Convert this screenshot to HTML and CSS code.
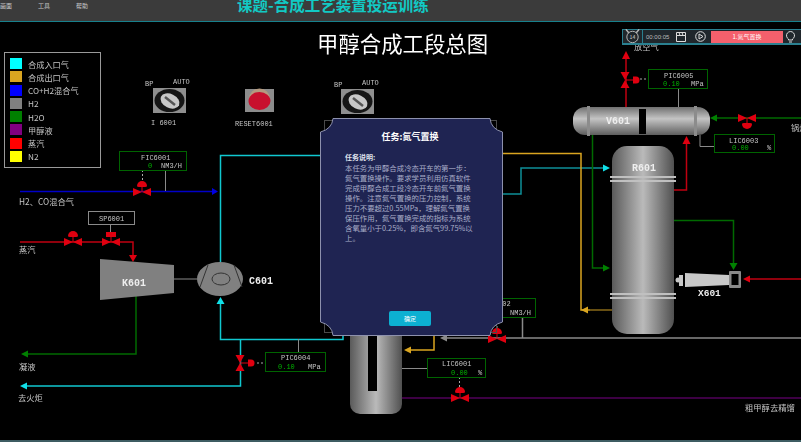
FILE: index.html
```html
<!DOCTYPE html>
<html lang="zh-CN">
<head>
    <meta charset="UTF-8">
    <title>甲醇合成工段总图</title>
    <link rel="stylesheet" href="styles.css">
</head>
<body>
    <header class="topbar">
        <nav class="menu">
            <span>画面</span>
            <span>工具</span>
            <span>帮助</span>
        </nav>
        <h1 class="course-title">课题-合成工艺装置投运训练</h1>
    </header>

    <main class="canvas">
        <svg class="diagram" viewBox="0 22 801 418" width="801" height="418">
            <defs>
                <linearGradient id="cyl" x1="0" x2="1" y1="0" y2="0">
                    <stop offset="0" stop-color="#5a5a5a"/>
                    <stop offset="0.5" stop-color="#bababa"/>
                    <stop offset="1" stop-color="#505050"/>
                </linearGradient>
                <linearGradient id="drum" x1="0" x2="0" y1="0" y2="1">
                    <stop offset="0" stop-color="#707070"/>
                    <stop offset="0.42" stop-color="#c4c4c4"/>
                    <stop offset="1" stop-color="#5e5e5e"/>
                </linearGradient>
                <g id="valve">
                    <path class="valve-stem" d="M0 0V-6"/>
                    <path class="valve-red" d="M-9 -4L0 0L-9 4ZM9 -4L0 0L9 4Z"/>
                    <path class="valve-red" d="M-5 -6A5 5 0 0 1 5 -6Q5 -5 3 -5H-3Q-5 -5 -5 -6Z"/>
                </g>
                <g id="valve-side">
                    <path class="valve-stem" d="M0 0H9"/>
                    <path class="valve-red" d="M-4.500 -8L0 0L4.500 -8ZM-4.500 8L0 0L4.500 8Z"/>
                    <path class="valve-red" d="M8 -3.500H11A3.500 3.500 0 0 1 11 3.500H8Z"/>
                </g>
                <g id="valve-flat">
                    <path class="valve-stem" d="M0 0V-6"/>
                    <path class="valve-red" d="M-9 -4L0 0L-9 4ZM9 -4L0 0L9 4Z"/>
                    <rect class="valve-red" x="-5" y="-10" width="10" height="5"/>
                </g>
                <g id="switch">
                    <rect width="33" height="25" fill="#8f8f8f"/>
                    <ellipse cx="16.500" cy="12.500" rx="15" ry="11.500" fill="#161616"/>
                    <ellipse cx="17" cy="13" rx="10" ry="7" fill="#c8c8c8" transform="rotate(25 17 13)"/>
                    <path d="M12 9L22 17" stroke="#555" stroke-width="2.500"/>
                </g>
            </defs>

            <text class="main-title" x="317" y="52">甲醇合成工段总图</text>

            <!-- pipes -->
            <path class="pipe blue" d="M20 191.500H214"/>
            <path class="arrow-blue" d="M218 191.500L212 188V195Z"/>
            <path class="pipe cyan" d="M220.500 262V155.500H330"/>
            <path class="pipe cyan" d="M220.500 300V339.500H343V330"/>
            <path class="arrow-cyan" d="M220.500 297L216.500 304H224.500Z"/>
            <path class="pipe cyan" d="M240.500 339.500V386H25"/>
            <path class="arrow-cyan" d="M20 386L27 382.500V389.500Z"/>
            <path class="pipe cyan dim" d="M495 194H521V168H606"/>
            <path class="arrow-cyan" d="M610 168L603 164.500V171.500Z"/>
            <path class="pipe red" d="M20 242H133V258"/>
            <path class="arrow-red" d="M133 262L129 255H137Z"/>
            <path class="pipe green" d="M136 293V354H27"/>
            <path class="arrow-green" d="M21 354L28 350.500V357.500Z"/>
            <path class="pipe thin-gray" d="M174 279H197" stroke-width="2"/>
            <path class="pipe orange" d="M495 153.500H581V310H590"/>
            <path class="pipe orange dark" d="M586 310H612"/>
            <path class="arrow-orange" d="M581 310L588 306.500V313.500Z"/>
            <path class="pipe orange" d="M434 330V350H410"/>
            <path class="arrow-orange" d="M404 350L411 346.500V353.500Z"/>
            <path class="pipe gray" d="M447 338H801"/>
            <path class="arrow-gray" d="M440 338L447 334.500V341.500Z"/>
            <path class="pipe gray" d="M522.500 318V338"/>
            <path class="pipe purple" d="M402 398H801"/>
            <path class="pipe red" d="M626 107V56"/>
            <path class="arrow-red" d="M626 51L622 59H630Z"/>
            <path class="pipe red" d="M673 190H686.500V142"/>
            <path class="arrow-red" d="M686.500 136L682.500 144H690.500Z"/>
            <path class="pipe green" d="M592.500 135V268H604"/>
            <path class="arrow-green" d="M610 268L603 264.500V271.500Z"/>
            <path class="pipe green" d="M674 220.500H733.500V265"/>
            <path class="arrow-green" d="M733.500 270L729.500 263H737.500Z"/>
            <path class="pipe green" d="M716 118H801"/>
            <path class="arrow-green" d="M710 118L717 114.500V121.500Z"/>
            <path class="pipe red" d="M749 279H801"/>
            <path class="arrow-red" d="M743 279L750 275.500V282.500Z"/>

            <!-- signal lines -->
            <path class="pipe thin-gray" d="M165.500 170V191M110.500 224V232M298.500 339V352M678.500 88V107M402 368.500H427M700 135V146.500H714"/>
            <path class="dash" d="M142.500 170V182M257 363H265M640 79H648M459.500 377V388M497 318V328"/>

            <!-- equipment -->
            <path class="machine" d="M100 259L174 265V293L100 300Z"/>
            <text class="equip" x="122" y="286">K601</text>
            <ellipse class="machine" cx="220" cy="279" rx="23" ry="17"/>
            <ellipse class="machine-line" cx="221" cy="279" rx="9" ry="6"/>
            <path class="machine-line" d="M208 265L200 287M234 265L242 287"/>
            <text class="equip" x="249" y="284">C601</text>

            <rect x="350" y="300" width="52" height="114" rx="10" fill="url(#cyl)"/>
            <rect x="368" y="300" width="9" height="91" fill="#000"/>

            <rect x="612" y="146" width="62" height="188" rx="15" fill="url(#cyl)"/>
            <rect class="band" x="610" y="176" width="66" height="2"/>
            <rect class="band" x="610" y="180" width="66" height="2"/>
            <rect class="band" x="610" y="293" width="66" height="2"/>
            <rect class="band" x="610" y="297" width="66" height="2"/>
            <text class="equip" x="632" y="171">R601</text>

            <rect x="573" y="107" width="137" height="28" rx="12" fill="url(#drum)"/>
            <rect class="band-v" x="587" y="106" width="3" height="30"/>
            <rect class="band-v" x="694" y="106" width="3" height="30"/>
            <rect x="639" y="109" width="7" height="25" fill="#000"/>
            <text class="equip" x="606" y="124">V601</text>

            <circle class="bolt" cx="678" cy="280" r="2.500"/>
            <rect class="bolt" x="679" y="275" width="4" height="11"/>
            <path class="bolt" d="M685 273L729 275V285L685 287Z"/>
            <rect x="729" y="271" width="12" height="17" rx="1" fill="#8a8a8a"/>
            <rect x="731.500" y="274" width="7" height="11" fill="#000"/>
            <text class="equip small" x="698" y="296">X601</text>

            <!-- valves -->
            <use href="#valve" x="142" y="192"/>
            <use href="#valve" x="73" y="242"/>
            <use href="#valve-flat" x="111" y="242"/>
            <use href="#valve" x="460" y="398"/>
            <use href="#valve" x="497" y="339"/>
            <use href="#valve" x="747" y="118" transform="rotate(180 747 118)"/>
            <use href="#valve-side" x="240" y="363"/>
            <use href="#valve-side" x="625" y="80"/>

            <!-- panel switches -->
            <use href="#switch" x="153" y="88"/>
            <use href="#switch" x="341" y="89"/>
            <rect x="245" y="89" width="29" height="23" fill="#8c8c8c"/>
            <circle cx="259.500" cy="99" r="10.500" fill="#b49a80"/>
            <ellipse cx="259.500" cy="101" rx="11" ry="9" fill="#c8102e"/>
            <text class="tag" x="145" y="86">BP</text>
            <text class="tag" x="173" y="84">AUTO</text>
            <text class="tag" x="151" y="125">I 6001</text>
            <text class="tag" x="235" y="126">RESET6001</text>
            <text class="tag" x="334" y="87">BP</text>
            <text class="tag" x="362" y="85">AUTO</text>

            <!-- instruments -->
            <rect class="inst" x="119.500" y="151.500" width="67" height="19"/>
            <text class="tag" x="141" y="160">FIC6001</text>
            <text class="val" x="148" y="168">0</text>
            <text class="tag" x="161" y="168">NM3/H</text>

            <rect class="inst-gray" x="88.500" y="211.500" width="46" height="13"/>
            <text class="tag" x="99" y="221">SP6001</text>

            <rect class="inst" x="265.500" y="352.500" width="60" height="19"/>
            <text class="tag" x="281" y="360">PIC6004</text>
            <text class="val" x="278" y="369">0.10</text>
            <text class="tag" x="308" y="369">MPa</text>

            <rect class="inst" x="427.500" y="358.500" width="58" height="19"/>
            <text class="tag" x="442" y="366">LIC6001</text>
            <text class="val" x="451" y="375">0.00</text>
            <text class="tag" x="478" y="375">%</text>

            <rect class="inst" x="488.500" y="298.500" width="47" height="19"/>
            <text class="tag" x="498" y="306">002</text>
            <text class="tag" x="510" y="315">NM3/H</text>

            <rect class="inst" x="648.500" y="69.500" width="59" height="19"/>
            <text class="tag" x="664" y="78">PIC6005</text>
            <text class="val" x="663" y="86">0.10</text>
            <text class="tag" x="691" y="86">MPa</text>

            <rect class="inst" x="714.500" y="134.500" width="60" height="18"/>
            <text class="tag" x="729" y="143">LIC6003</text>
            <text class="val" x="732" y="150">0.00</text>
            <text class="tag" x="767" y="150">%</text>

            <!-- stream labels -->
            <text class="label" x="19" y="205">H2、CO混合气</text>
            <text class="label" x="19" y="253">蒸汽</text>
            <text class="label" x="19" y="370">凝液</text>
            <text class="label" x="18" y="401">去火炬</text>
            <text class="label" x="745" y="411">粗甲醇去精馏</text>
            <text class="label" x="791" y="131">锅炉</text>
            <text class="label" x="634" y="50">放空气</text>

            <!-- frame behind the task dialog -->
            <rect class="modal-frame" x="324.500" y="120.500" width="172" height="212"/>
        </svg>

        <ul class="legend">
            <li><i class="swatch s-cyan"></i>合成入口气</li>
            <li><i class="swatch s-orange"></i>合成出口气</li>
            <li><i class="swatch s-blue"></i>CO+H2混合气</li>
            <li><i class="swatch s-gray"></i>H2</li>
            <li><i class="swatch s-green"></i>H2O</li>
            <li><i class="swatch s-purple"></i>甲醇液</li>
            <li><i class="swatch s-red"></i>蒸汽</li>
            <li><i class="swatch s-yellow"></i>N2</li>
        </ul>

        <div class="toolbar">
            <svg class="tool-clock" width="20" height="15" viewBox="0 0 20 15">
                <path d="M3 0L6 3.500M17 0L14 3.500" stroke="#bbb" stroke-width="1.500" fill="none"/>
                <circle cx="10" cy="8" r="6" stroke="#bbb" fill="none"/>
                <text x="10" y="10" text-anchor="middle" class="clock-num">14</text>
            </svg>
            <span class="tool-time">00:00:05</span>
            <svg class="tool-doc" width="10" height="10" viewBox="0 0 10 10">
                <path d="M0.500 3.500H9.500V9.500H0.500ZM0.500 0.500H9.500V3.500H0.500ZM3 0.500L4 3.500M6 0.500L7 3.500" stroke="#ddd" fill="none"/>
            </svg>
            <svg class="tool-play" width="11" height="11" viewBox="0 0 11 11">
                <circle cx="5.500" cy="5.500" r="4.800" stroke="#ddd" fill="none"/>
                <path d="M4 3L8 5.500L4 8Z" stroke="#ddd" fill="none"/>
            </svg>
            <span class="tool-step">1.氮气置换</span>
            <svg class="tool-bulb" width="9" height="12" viewBox="0 0 9 12">
                <path d="M2.500 8A4 4 0 1 1 6.500 8V9H2.500ZM3 11H6" stroke="#ddd" fill="none"/>
            </svg>
        </div>

        <section class="task-modal">
            <svg class="modal-shape" viewBox="0 0 183 218" width="183" height="218">
                <path d="M13 .5H170Q171 11 182.500 14V204Q171 207 170 217.500H13Q12 207 .5 204V14Q12 11 13 .5Z"/>
            </svg>
            <div class="modal-body">
                <h2>任务:氮气置换</h2>
                <h3>任务说明:</h3>
                <p>本任务为甲醇合成冷态开车的第一步&#65306;氮气置换操作。要求学员利用仿真软件完成甲醇合成工段冷态开车前氮气置换操作。注意氮气置换的压力控制&#65292;系统压力不要超过0.55MPa&#65292;理解氮气置换保压作用&#65292;氮气置换完成的指标为系统含氧量小于0.25%&#65292;即含氮气99.75%以上。</p>
                <button class="confirm">确定</button>
            </div>
        </section>
    </main>

    <div class="bottom-strip"></div>
</body>
</html>
```

FILE: styles.css
```css
* {
    box-sizing: border-box;
    margin: 0;
    padding: 0;
}

html, body {
    width: 801px;
    height: 442px;
    overflow: hidden;
    background-color: #000;
}

body {
    font-family: "Noto Sans CJK SC", "Liberation Sans", sans-serif;
    display: flex;
    flex-direction: column;
}

.topbar {
    height: 22px;
    flex: none;
    display: flex;
    overflow: hidden;
    background-color: #3b3b3b;
    border-bottom: 1px solid #17808c;
}

.menu {
    display: flex;
    gap: 26px;
    width: 237px;
    padding-top: 1px;
    font-size: 6px;
    line-height: 10px;
    color: #c8c8c8;
}

.course-title {
    font-size: 15.500px;
    line-height: 16px;
    margin-top: -4px;
    color: #12c9c4;
    white-space: nowrap;
}

.canvas {
    position: relative;
    flex: 1;
}

.diagram {
    display: block;
    filter: blur(0.35px);
}

.main-title {
    font-size: 21.400px;
    fill: #fff;
}

.pipe {
    fill: none;
    stroke-width: 1.500;
}

.blue { stroke: #0000c8; }
.cyan { stroke: #10c8d0; }
.cyan.dim { stroke: #0e8f98; }
.red { stroke: #c00010; }
.green { stroke: #006a00; }
.orange { stroke: #daa520; }
.orange.dark { stroke: #8a6a18; }
.gray { stroke: #8a8a8a; }
.thin-gray { stroke: #8a8a8a; stroke-width: 1; }
.purple { stroke: #50005a; }

.arrow-blue { fill: #0000e0; }
.arrow-cyan { fill: #10e0e8; }
.arrow-red { fill: #e00010; }
.arrow-green { fill: #008000; }
.arrow-orange { fill: #daa520; }
.arrow-gray { fill: #8a8a8a; }

.dash {
    stroke: #aaa;
    stroke-dasharray: 2 2;
    fill: none;
}

.machine { fill: #808080; }

.machine-line {
    fill: none;
    stroke: #333;
}

.band { fill: #c0c0c0; }
.band-v { fill: #8c8c8c; }
.bolt { fill: #c8c8c8; }

.modal-frame {
    fill: none;
    stroke: #4a4a4a;
}

.equip {
    font-family: "Liberation Mono", monospace;
    font-size: 10px;
    font-weight: bold;
    fill: #eee;
}

.equip.small {
    font-size: 9.500px;
}

.valve-red { fill: #e00010; }
.valve-stem { stroke: #e00010; }

.tag {
    font-family: "Liberation Mono", monospace;
    font-size: 7px;
    fill: #c4c4c4;
}

.val {
    font-family: "Liberation Mono", monospace;
    font-size: 7px;
    fill: #00b000;
}

.label {
    font-size: 8.300px;
    fill: #c4c4c4;
}

.inst {
    fill: #000;
    stroke: #006400;
}

.inst-gray {
    fill: #000;
    stroke: #8a8a8a;
}

.legend {
    position: absolute;
    left: 4px;
    top: 30px;
    width: 97px;
    height: 116px;
    padding: 5px 5px;
    display: flex;
    flex-direction: column;
    justify-content: space-between;
    list-style: none;
    background-color: #000;
    border: 1px solid #9a9a9a;
    font-size: 8.200px;
    color: #c4c4c4;
    filter: blur(0.3px);
}

.legend li {
    display: flex;
    align-items: center;
    gap: 6px;
    height: 11px;
}

.swatch {
    width: 12px;
    height: 11px;
    flex: none;
}

.s-cyan { background-color: #00ffff; }
.s-orange { background-color: #daa520; }
.s-blue { background-color: #0000ff; }
.s-gray { background-color: #808080; }
.s-green { background-color: #008000; }
.s-purple { background-color: #800080; }
.s-red { background-color: #ff0000; }
.s-yellow { background-color: #ffff00; }

.toolbar {
    position: absolute;
    left: 622px;
    top: 7px;
    width: 179px;
    height: 16px;
    display: flex;
    align-items: center;
    background-color: #20272c;
    border: 1px solid #2a8090;
    border-bottom-width: 2px;
    border-right: none;
    color: #ddd;
    font-size: 6px;
}

.tool-clock {
    flex: none;
    margin-right: 3px;
    border-right: 1px solid #2a8090;
}

.clock-num {
    font-size: 5.500px;
    fill: #ccc;
}

.tool-time {
    width: 30px;
    font-family: "Liberation Sans", sans-serif;
    font-size: 6px;
    color: #bbb;
}

.tool-doc {
    margin-right: 9px;
}

.tool-play {
    margin-right: 5px;
}

.tool-step {
    width: 72px;
    height: 12px;
    margin-right: 3px;
    line-height: 12px;
    text-align: center;
    color: #fff;
    background-color: #f4606c;
}

.task-modal {
    position: absolute;
    left: 320px;
    top: 96px;
    width: 183px;
    height: 218px;
}

.modal-shape {
    position: absolute;
    left: 0;
    top: 0;
}

.modal-shape path {
    fill: #1f2452;
    stroke: #8d91ad;
}

.modal-body {
    position: relative;
    height: 100%;
    padding: 12px 28px 10px 25px;
    display: flex;
    flex-direction: column;
    color: #a9adc8;
}

.modal-body h2 {
    font-size: 9px;
    line-height: 14px;
    text-align: center;
    color: #fff;
}

.modal-body h3 {
    margin-top: 7px;
    font-size: 7px;
    line-height: 12px;
    color: #dfe1ec;
}

.modal-body p {
    font-size: 7.400px;
    line-height: 10px;
}

.confirm {
    margin: auto auto 0;
    width: 42px;
    height: 15px;
    border: none;
    border-radius: 2px;
    background-color: #0cb0d2;
    color: #fff;
    font-family: inherit;
    font-size: 6px;
}

.bottom-strip {
    height: 2px;
    flex: none;
    background-color: #3d5c62;
}
```
